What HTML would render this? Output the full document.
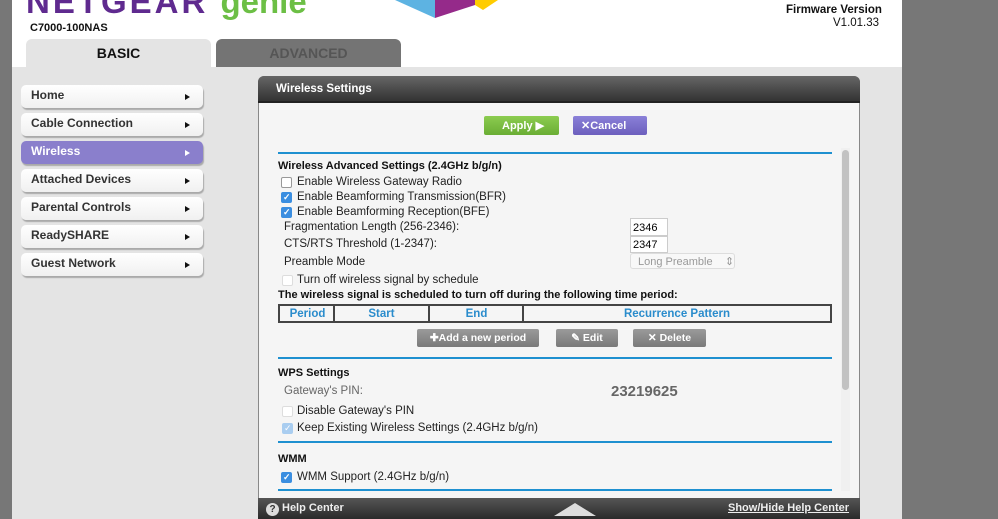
<!DOCTYPE html>
<html><head><style>
*{margin:0;padding:0;box-sizing:border-box}
body{width:998px;height:519px;overflow:hidden;background:#777;font-family:"Liberation Sans",Arial,sans-serif;position:relative}
.a{position:absolute;white-space:nowrap}
.nav{position:absolute;left:21px;width:182px;height:23px;background:linear-gradient(#fff,#f0f0f0);border-radius:5px;box-shadow:1px 2px 1px #aaa;font-size:12px;font-weight:bold;color:#333;padding:3px 0 0 10px}
.nav:after{content:"";position:absolute;right:13px;top:9px;border-left:5px solid #111;border-top:3.5px solid transparent;border-bottom:3.5px solid transparent}
.nav.on{background:#8a7fcc;color:#fff}
.nav.on:after{border-left-color:#fff}
.t{font-size:11.5px;color:#222}
.cb{position:absolute;width:11px;height:11px;border:1px solid #999;border-radius:2px;background:#fff}
.cb.k{background:#3b8ee0;border-color:#3b8ee0}
.cb.k:after{content:"✓";color:#fff;font-size:9px;position:absolute;left:1px;top:-1px;font-weight:bold}
.cb.d{border-color:#ddd}
.cb.dk{background:#a9cdf0;border-color:#a9cdf0}
.cb.dk:after{content:"✓";color:#fff;font-size:9px;position:absolute;left:1px;top:-1px}
.hr{position:absolute;left:278px;width:554px;height:2px;background:#1e90d0}
.gb{position:absolute;height:18px;background:linear-gradient(#9a9a9a,#7a7a7a);border-radius:2px;color:#fff;font-size:10.5px;font-weight:bold;text-align:center;padding-top:3px}
.th{position:absolute;top:304px;height:19px;border:2px solid #444;border-right:none;color:#2a8ccc;font-weight:bold;font-size:11.5px;text-align:center;padding-top:2px}
.h{font-size:11px;font-weight:bold;color:#111}
</style></head><body>
<div class="a" style="left:12px;top:0;width:890px;height:519px;background:#e4e4e4"></div>
<div class="a" style="left:12px;top:0;width:890px;height:67px;background:#fff"></div>
<div class="a" style="left:26px;top:-17px;font-size:33px;font-weight:bold;color:#5f2a8f;letter-spacing:3px">NETGEAR <span style="color:#6cbf45;letter-spacing:0">genie</span></div>
<svg class="a" style="left:395px;top:0" width="110" height="20"><polygon points="0,0 40,0 40,18" fill="#5db3e2"/><polygon points="40,0 80,0 80,5 40,18" fill="#952a8a"/><polygon points="80,0 103,0 88,10 80,5" fill="#ffcc00"/></svg>
<div class="a" style="left:30px;top:22px;font-size:11px;font-weight:bold;color:#111">C7000-100NAS</div>
<div class="a" style="left:786px;top:4px;font-size:11.5px;font-weight:bold;color:#111">Firmware Version</div>
<div class="a" style="left:833px;top:17px;font-size:11.5px;color:#111">V1.01.33</div>
<div class="a" style="left:26px;top:39px;width:185px;height:28px;background:#e4e4e4;border-radius:6px 6px 0 0;text-align:center;font-size:14px;font-weight:bold;padding-top:6px;color:#111">BASIC</div>
<div class="a" style="left:216px;top:39px;width:185px;height:28px;background:#747474;border-radius:6px 6px 0 0;text-align:center;font-size:14px;font-weight:bold;padding-top:6px;color:#555">ADVANCED</div>
<div class="nav" style="top:85px">Home</div>
<div class="nav" style="top:113px">Cable Connection</div>
<div class="nav on" style="top:141px">Wireless</div>
<div class="nav" style="top:169px">Attached Devices</div>
<div class="nav" style="top:197px">Parental Controls</div>
<div class="nav" style="top:225px">ReadySHARE</div>
<div class="nav" style="top:253px">Guest Network</div>

<div class="a" style="left:258px;top:76px;width:602px;height:443px;background:#f5f5f5;border:1px solid #888;border-radius:6px 6px 0 0"></div>
<div class="a" style="left:258px;top:76px;width:602px;height:27px;background:linear-gradient(#666,#333);border-radius:6px 6px 0 0;border-bottom:2px solid #222"></div>
<div class="a" style="left:276px;top:83px;font-size:11.5px;font-weight:bold;color:#fff">Wireless Settings</div>
<div class="a" style="left:484px;top:116px;width:75px;height:19px;background:linear-gradient(#8ccc50,#6aad34);border-radius:2px;color:#fff;font-size:11px;font-weight:bold;padding:3px 0 0 18px">Apply ▶</div>
<div class="a" style="left:573px;top:116px;width:74px;height:19px;background:linear-gradient(#8a80d8,#6c5fbd);border-radius:2px;color:#fff;font-size:11px;font-weight:bold;padding:3px 0 0 8px">✕Cancel</div>
<div class="hr" style="top:152px"></div>
<div class="a" style="left:841px;top:148px;width:9px;height:343px;background:#f0f0f0"></div>
<div class="a" style="left:842px;top:150px;width:7px;height:240px;background:#c2c2c2;border-radius:4px"></div>

<div class="a h" style="left:278px;top:160px">Wireless Advanced Settings (2.4GHz b/g/n)</div>
<div class="cb" style="left:281px;top:177px"></div><div class="a t" style="left:297px;top:176px">Enable Wireless Gateway Radio</div>
<div class="cb k" style="left:281px;top:192px"></div><div class="a t" style="left:297px;top:191px">Enable Beamforming Transmission(BFR)</div>
<div class="cb k" style="left:281px;top:207px"></div><div class="a t" style="left:297px;top:206px">Enable Beamforming Reception(BFE)</div>
<div class="a t" style="left:284px;top:221px">Fragmentation Length (256-2346):</div>
<div class="a t" style="left:284px;top:238px">CTS/RTS Threshold (1-2347):</div>
<div class="a t" style="left:284px;top:256px">Preamble Mode</div>
<div class="a" style="left:630px;top:218px;width:38px;height:18px;background:#fff;border:1px solid #ccc;font-size:11px;padding:3px 0 0 2px">2346</div>
<div class="a" style="left:630px;top:236px;width:38px;height:17px;background:#fff;border:1px solid #ccc;font-size:11px;padding:2px 0 0 2px">2347</div>
<div class="a" style="left:630px;top:253px;width:105px;height:16px;background:#f8f8f8;border:1px solid #ddd;border-radius:3px;font-size:11px;color:#999;padding:1px 0 0 7px">Long Preamble&nbsp;&nbsp;&nbsp;&nbsp;⇕</div>
<div class="cb d" style="left:282px;top:275px"></div><div class="a t" style="left:297px;top:274px">Turn off wireless signal by schedule</div>
<div class="a h" style="left:278px;top:289px">The wireless signal is scheduled to turn off during the following time period:</div>
<div class="th" style="left:278px;width:57px">Period</div>
<div class="th" style="left:333px;width:95px">Start</div>
<div class="th" style="left:428px;width:95px">End</div>
<div class="th" style="left:522px;width:310px;border-right:2px solid #444">Recurrence Pattern</div>
<div class="gb" style="left:417px;top:329px;width:122px">✚Add a new period</div>
<div class="gb" style="left:556px;top:329px;width:62px">✎ Edit</div>
<div class="gb" style="left:633px;top:329px;width:73px">✕ Delete</div>
<div class="hr" style="top:357px"></div>
<div class="a h" style="left:278px;top:367px">WPS Settings</div>
<div class="a t" style="left:284px;top:385px;color:#666">Gateway's PIN:</div>
<div class="a" style="left:611px;top:383px;font-size:15px;font-weight:bold;color:#666">23219625</div>
<div class="cb d" style="left:282px;top:406px"></div><div class="a t" style="left:297px;top:405px">Disable Gateway's PIN</div>
<div class="cb dk" style="left:282px;top:423px"></div><div class="a t" style="left:297px;top:422px">Keep Existing Wireless Settings (2.4GHz b/g/n)</div>
<div class="hr" style="top:441px"></div>
<div class="a h" style="left:278px;top:453px">WMM</div>
<div class="cb k" style="left:281px;top:472px"></div><div class="a t" style="left:297px;top:471px">WMM Support (2.4GHz b/g/n)</div>
<div class="hr" style="top:489px"></div>

<div class="a" style="left:258px;top:498px;width:602px;height:21px;background:linear-gradient(#555,#2a2a2a)"></div>
<div class="a" style="left:266px;top:503px;width:13px;height:13px;border-radius:50%;background:#ddd;color:#333;font-size:10px;font-weight:bold;text-align:center;line-height:13px">?</div>
<div class="a" style="left:282px;top:502px;font-size:11px;font-weight:bold;color:#eee">Help Center</div>
<svg class="a" style="left:550px;top:499px" width="50" height="18"><polygon points="4,17 25,4 46,17" fill="#ddd"/></svg>
<div class="a" style="left:728px;top:502px;font-size:11px;font-weight:bold;color:#eee;text-decoration:underline">Show/Hide Help Center</div>
</body></html>
